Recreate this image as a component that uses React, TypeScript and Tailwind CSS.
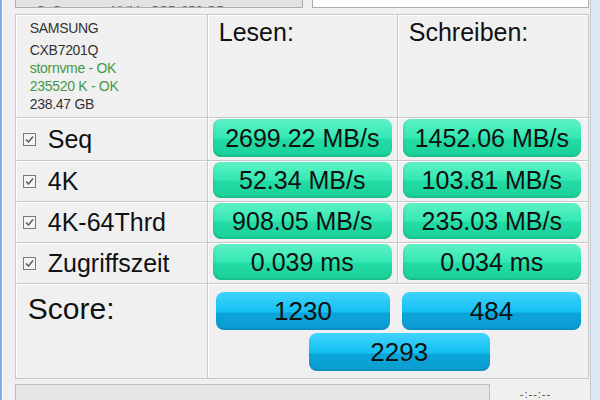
import React from "react";

const rows = [
  { label: "Seq", read: "2699.22 MB/s", write: "1452.06 MB/s" },
  { label: "4K", read: "52.34 MB/s", write: "103.81 MB/s" },
  { label: "4K-64Thrd", read: "908.05 MB/s", write: "235.03 MB/s" },
  { label: "Zugriffszeit", read: "0.039 ms", write: "0.034 ms" },
];

const cell = "border-r border-b border-[#c8c8c8] shadow-[inset_1px_1px_0_#ffffff]";

const CheckBox = () => (
  <svg width="13" height="13" viewBox="0 0 13 13" className="shrink-0">
    <rect x="0.5" y="0.5" width="12" height="12" fill="#f4f4f4" stroke="#7a7a7a" />
    <path d="M3 6.5 L5.5 9 L10 3.5" fill="none" stroke="#555" strokeWidth="1.4" />
  </svg>
);

const GreenBar = ({ text }: { text: string }) => (
  <div className="h-full rounded-[8px] flex items-center justify-center text-[25px] leading-none text-[#111] bg-[linear-gradient(to_bottom,#5ef2c6_0%,#34e8b3_50%,#22dca4_54%,#1ccf99_100%)] shadow-[inset_0_-2px_1px_rgba(0,90,60,0.12),inset_2px_0_2px_rgba(0,90,60,0.08)]">
    {text}
  </div>
);

const BlueBar = ({ text, className }: { text: string; className?: string }) => (
  <div
    className={`h-[38px] rounded-[8px] flex items-center justify-center text-[26px] leading-none text-[#111] bg-[linear-gradient(to_bottom,#40d3fb_0%,#14c0f3_52%,#0aa4da_56%,#0a9ccf_100%)] shadow-[inset_0_-2px_1px_rgba(0,60,100,0.12)] ${className ?? ""}`}
  >
    {text}
  </div>
);

export default function App() {
  return (
    <div className="w-[600px] h-[400px] bg-[#f0f0f0] flex overflow-hidden font-['Liberation_Sans',Arial,sans-serif]">
      <div className="w-[2px] bg-[#7fb0e6]" />
      <div className="w-[1px] bg-white" />

      <div className="flex-1 pl-[12px] pr-[1px] flex flex-col">
        {/* top controls, mostly cut off */}
        <div className="flex gap-[9px] h-[8px]">
          <div className="w-[288px] h-full bg-[#e3e3e3] border border-t-0 border-[#adadad] overflow-hidden flex items-end pl-[20px]">
            <span className="text-[13px] leading-[13px] text-[#666] translate-y-[10px]">
              C: Samsung NVMe SSD 256 GB
            </span>
          </div>
          <div className="flex-1 h-full bg-white border border-t-0 border-[#adadad]" />
        </div>

        <div className="mt-[6px] grid grid-cols-[192px_190px_191px] grid-rows-[103px_43px_41px_41px_41px_95px] border-l border-t border-[#c8c8c8]">
          {/* header */}
          <div className={`${cell} pl-[14px] pt-[4px] text-[14px] leading-[18px] text-[#333] tracking-[-0.3px]`}>
            <div className="mb-[4px]">SAMSUNG</div>
            <div>CXB7201Q</div>
            <div className="text-[#459845]">stornvme - OK</div>
            <div className="text-[#459845]">235520 K - OK</div>
            <div>238.47 GB</div>
          </div>
          <div className={`${cell} pl-[11px] pt-[5px] text-[25px] leading-[25px] text-[#111]`}>Lesen:</div>
          <div className={`${cell} pl-[11px] pt-[5px] text-[25px] leading-[25px] text-[#111]`}>Schreiben:</div>

          {rows.map((r) => (
            <React.Fragment key={r.label}>
              <div className={`${cell} flex items-center gap-[12px] pl-[7px] text-[25px] leading-none text-[#111]`}>
                <CheckBox />
                <span>{r.label}</span>
              </div>
              <div className={`${cell} pl-[5px] pr-[5px] pt-[1px] pb-[3px]`}>
                <GreenBar text={r.read} />
              </div>
              <div className={`${cell} pl-[5px] pr-[7px] pt-[1px] pb-[3px]`}>
                <GreenBar text={r.write} />
              </div>
            </React.Fragment>
          ))}

          {/* score */}
          <div className={`${cell} pl-[12px] pt-[10px] text-[30px] leading-[30px] text-[#111]`}>Score:</div>
          <div className={`${cell} col-span-2 pt-[8px] pl-[8px] pr-[7px] flex flex-col gap-[3px]`}>
            <div className="flex gap-[12px]">
              <BlueBar text="1230" className="w-[175px]" />
              <BlueBar text="484" className="w-[179px]" />
            </div>
            <BlueBar text="2293" className="w-[181px] ml-[93px]" />
          </div>
        </div>

        {/* bottom */}
        <div className="mt-[5px] flex items-start">
          <div className="w-[475px] h-[24px] bg-[#e6e6e6] border border-[#bcbcbc]" />
          <span className="ml-[30px] mt-[5px] text-[11px] leading-none text-[#444] tracking-[1px]">-:--:--</span>
        </div>
      </div>

      <div className="w-[11px] border-l border-[#c2c8d0] bg-[#dce9f7]" />
    </div>
  );
}
